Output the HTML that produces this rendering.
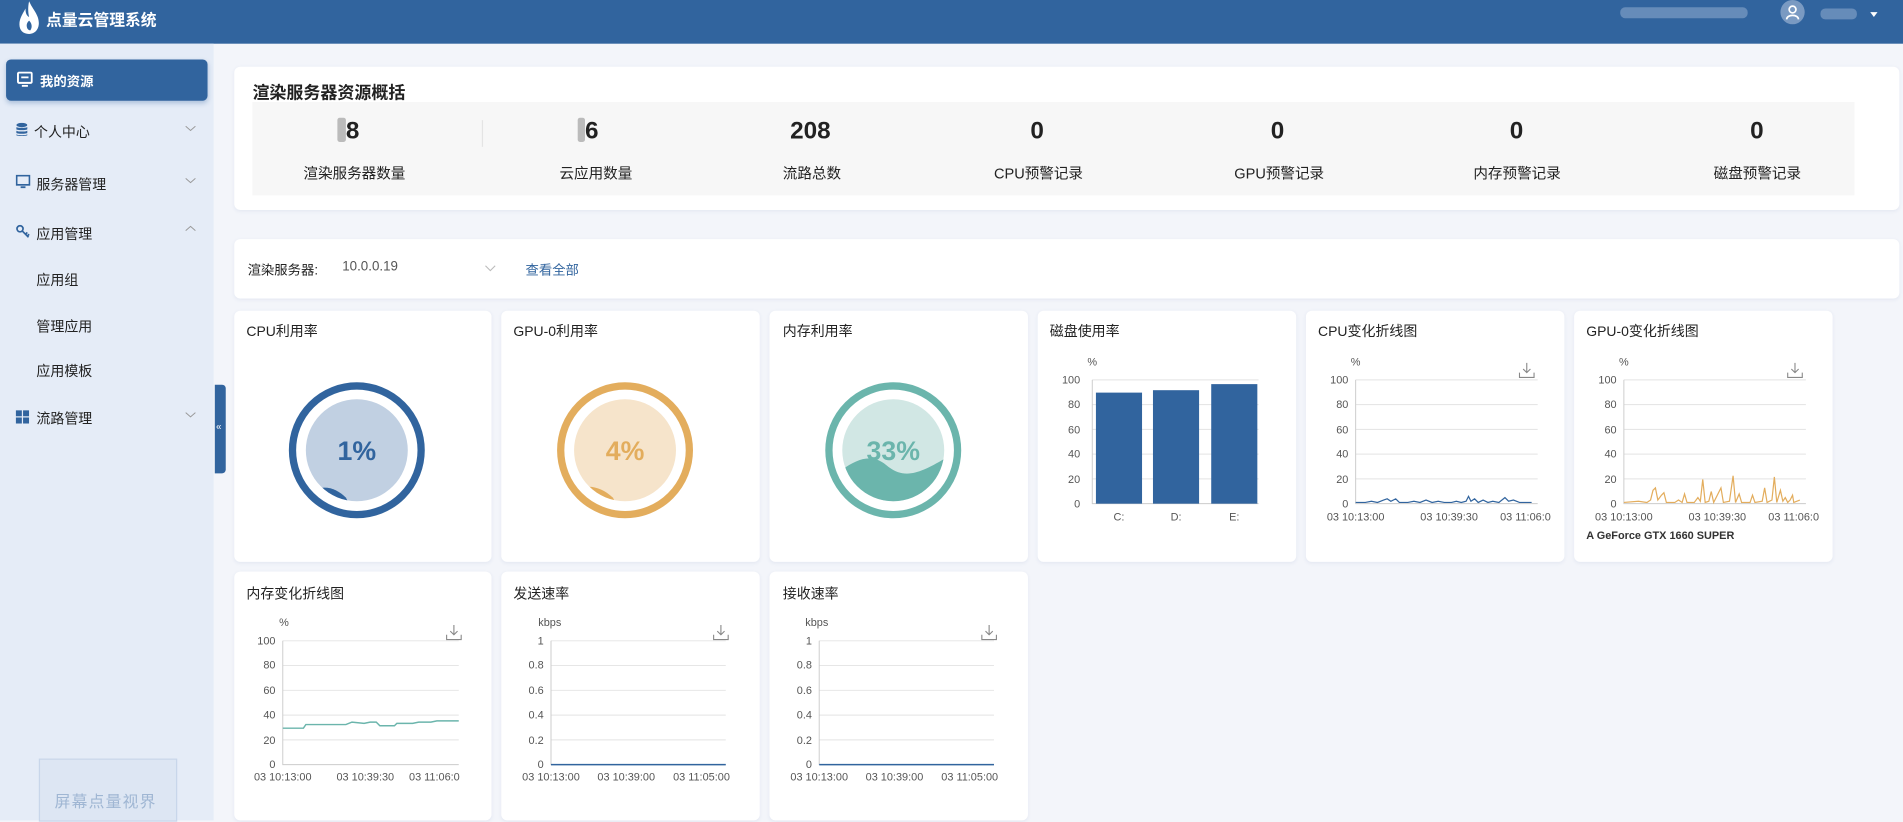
<!DOCTYPE html>
<html><head><meta charset="utf-8"><style>
html,body{margin:0;padding:0;width:1903px;height:811px;overflow:hidden;background:#f3f5fa;}
#w{position:absolute;left:0;top:0;width:1568px;height:668px;transform:scale(1.21365);transform-origin:0 0;font-family:"Liberation Sans","Noto Sans CJK SC",sans-serif;color:#333;font-size:12px;}
.a{position:absolute;}
.card{position:absolute;background:#fff;border-radius:5px;box-shadow:0 1px 3px rgba(60,90,150,.08);}
.t{position:absolute;font-size:12px;color:#222;white-space:nowrap;}
.s{font-size:11.5px;}
</style></head><body><div id="w">
<div class="a" style="left:0;top:0;width:1568px;height:36px;background:#31649e"></div>
<svg class="a" style="left:15px;top:1px" width="18" height="28" viewBox="0 0 18 28"><path d="M9 0 C12 7 17 11 17 18 C17 24 13 27 9 27 C4 27 1 24 1 19 C1 14 4 10 6 6 C6 10 7 12 9 13 C8 9 8 4 9 0Z" fill="#fff"/><path d="M9 16 C11 18 12 21 10 24 C8 24 7 22 7 20 C7 18 8 17 9 16Z" fill="#31649e"/></svg>
<div class="t" style="left:38px;top:6px;color:#fff;font-weight:bold;font-size:13px">点量云管理系统</div>
<div class="a" style="left:1335px;top:6px;width:105px;height:9px;background:#7d9cc4;border-radius:4px;opacity:.7"></div>
<div class="a" style="left:1467px;top:0px;width:20px;height:20px;border-radius:50%;background:#7a9ac2"></div>
<svg class="a" style="left:1470px;top:3px" width="14" height="14" viewBox="0 0 13 13"><circle cx="6.5" cy="4.5" r="2.6" fill="none" stroke="#fff" stroke-width="1.3"/><path d="M2 12 C2 8 11 8 11 12" fill="none" stroke="#fff" stroke-width="1.3"/></svg>
<div class="a" style="left:1500px;top:7px;width:30px;height:9px;background:#7d9cc4;border-radius:4px;opacity:.7"></div>
<div class="a" style="left:1541px;top:10px;width:0;height:0;border-left:3.5px solid transparent;border-right:3.5px solid transparent;border-top:4px solid #fff"></div>
<div class="a" style="left:0;top:36px;width:176px;height:640px;background:#e5ecf7"></div>
<div class="a" style="left:5px;top:49px;width:166px;height:34px;background:#31649e;border-radius:4px;box-shadow:0 2px 4px rgba(49,100,158,.3)"></div>
<svg class="a" style="left:14px;top:59px" width="13" height="13" viewBox="0 0 13 13"><rect x="0.8" y="0.8" width="11.4" height="8.5" rx="1" fill="none" stroke="#fff" stroke-width="1.6"/><rect x="3.5" y="4" width="6" height="1.5" fill="#fff"/><rect x="4" y="11" width="5" height="1.5" fill="#fff"/></svg>
<div class="t" style="left:33px;top:59px;color:#fff;font-weight:bold;font-size:11px">我的资源</div>
<svg class="a" style="left:13px;top:101px" width="10" height="12" viewBox="0 0 10 12"><ellipse cx="5" cy="2" rx="4.5" ry="1.8" fill="#31649e"/><path d="M0.5 3.5v2c0 1 9 1 9 0v-2c0 1.2-9 1.2-9 0zM0.5 6.5v2c0 1 9 1 9 0v-2c0 1.2-9 1.2-9 0zM0.5 9.5v.8c0 1 9 1 9 0v-.8c0 1.2-9 1.2-9 0z" fill="#31649e"/></svg>
<div class="t s" style="left:28px;top:101px">个人中心</div>
<svg class="a" style="left:13px;top:144px" width="12" height="12" viewBox="0 0 12 12"><rect x="0.7" y="0.7" width="10.6" height="7.6" fill="none" stroke="#31649e" stroke-width="1.4"/><rect x="4" y="9.5" width="4" height="1.5" fill="#31649e"/></svg>
<div class="t s" style="left:30px;top:144px">服务器管理</div>
<svg class="a" style="left:13px;top:185px" width="12" height="12" viewBox="0 0 12 12"><circle cx="3.5" cy="3.5" r="2.5" fill="none" stroke="#31649e" stroke-width="1.4"/><path d="M5.3 5.3 L10.5 10.5 M8 8 L9.5 6.5 M9.5 9.5 L11 8" stroke="#31649e" stroke-width="1.4"/></svg>
<div class="t s" style="left:30px;top:185px">应用管理</div>
<div class="t s" style="left:30px;top:223px">应用组</div>
<div class="t s" style="left:30px;top:261px">管理应用</div>
<div class="t s" style="left:30px;top:298px">应用模板</div>
<svg class="a" style="left:13px;top:338px" width="11" height="11" viewBox="0 0 11 11"><rect x="0" y="0" width="5" height="5" fill="#31649e"/><rect x="6" y="0" width="5" height="5" fill="#31649e"/><rect x="0" y="6" width="5" height="5" fill="#31649e"/><rect x="6" y="6" width="5" height="5" fill="#31649e"/></svg>
<div class="t s" style="left:30px;top:337px">流路管理</div>
<svg class="a" style="left:0;top:0" width="176" height="400"><g fill="none" stroke="#999" stroke-width="0.8"><path d="M153 104l4 3.5l4-3.5M153 147l4 3.5l4-3.5M153 340l4 3.5l4-3.5M153 190l4-3.5l4 3.5"/></g></svg>
<div class="a" style="left:177px;top:317px;width:9px;height:73px;background:#31649e;border-radius:0 3px 3px 0"></div>
<div class="t" style="left:178px;top:347px;color:#fff;font-size:8px">«</div>
<div class="a" style="left:32px;top:625px;width:112px;height:50px;background:#dde6f3;border:1px solid #c8d6ea"></div>
<div class="t" style="left:45px;top:650px;color:#9fb6d3;font-size:13px;letter-spacing:1px">屏幕点量视界</div>
<div class="card" style="left:193px;top:55px;width:1372px;height:118px"></div>
<div class="t" style="left:208px;top:66px;font-weight:bold;font-size:14px;color:#222">渲染服务器资源概括</div>
<div class="a" style="left:208px;top:84px;width:1320px;height:77px;background:#f7f7f7"></div>
<div class="a" style="left:397px;top:99px;width:1px;height:22px;background:#e4e4e4"></div>
<div class="t" style="left:278px;top:97px;font-weight:bold;font-size:20px;color:#222"><span style="display:inline-block;width:7px;height:20px;background:#bbb;vertical-align:-3px;border-radius:2px"></span>8</div>
<div class="t" style="left:476px;top:97px;font-weight:bold;font-size:20px;color:#222"><span style="display:inline-block;width:6px;height:20px;background:#bbb;vertical-align:-3px;border-radius:2px"></span>6</div>
<div class="t" style="left:651px;top:97px;font-weight:bold;font-size:20px;color:#222">208</div>
<div class="t" style="left:849px;top:97px;font-weight:bold;font-size:20px;color:#222">0</div>
<div class="t" style="left:1047px;top:97px;font-weight:bold;font-size:20px;color:#222">0</div>
<div class="t" style="left:1244px;top:97px;font-weight:bold;font-size:20px;color:#222">0</div>
<div class="t" style="left:1442px;top:97px;font-weight:bold;font-size:20px;color:#222">0</div>
<div class="t" style="left:250px;top:134px">渲染服务器数量</div>
<div class="t" style="left:461px;top:134px">云应用数量</div>
<div class="t" style="left:645px;top:134px">流路总数</div>
<div class="t" style="left:819px;top:134px">CPU预警记录</div>
<div class="t" style="left:1017px;top:134px">GPU预警记录</div>
<div class="t" style="left:1214px;top:134px">内存预警记录</div>
<div class="t" style="left:1412px;top:134px">磁盘预警记录</div>
<div class="card" style="left:193px;top:197px;width:1372px;height:49px"></div>
<div class="t" style="left:204px;top:214px;font-size:11px">渲染服务器:</div>
<div class="t" style="left:282px;top:214px;font-size:11px;color:#555">10.0.0.19</div>
<svg class="a" style="left:399px;top:218px" width="10" height="6"><path d="M1 1l4 4l4-4" fill="none" stroke="#bbb" stroke-width="0.9"/></svg>
<div class="t" style="left:433px;top:214px;font-size:11px;color:#31649e">查看全部</div>
<div class="card" style="left:193px;top:256px;width:212px;height:207px"></div>
<div class="card" style="left:413px;top:256px;width:213px;height:207px"></div>
<div class="card" style="left:634px;top:256px;width:213px;height:207px"></div>
<div class="card" style="left:855px;top:256px;width:213px;height:207px"></div>
<div class="card" style="left:1076px;top:256px;width:213px;height:207px"></div>
<div class="card" style="left:1297px;top:256px;width:213px;height:207px"></div>
<div class="card" style="left:193px;top:471px;width:212px;height:205px"></div>
<div class="card" style="left:413px;top:471px;width:213px;height:205px"></div>
<div class="card" style="left:634px;top:471px;width:213px;height:205px"></div>
<div class="t s" style="left:203px;top:265px">CPU利用率</div>
<div class="t s" style="left:423px;top:265px">GPU-0利用率</div>
<div class="t s" style="left:645px;top:265px">内存利用率</div>
<div class="t s" style="left:865px;top:265px">磁盘使用率</div>
<div class="t s" style="left:1086px;top:265px">CPU变化折线图</div>
<div class="t s" style="left:1307px;top:265px">GPU-0变化折线图</div>
<div class="t s" style="left:203px;top:481px">内存变化折线图</div>
<div class="t s" style="left:423px;top:481px">发送速率</div>
<div class="t s" style="left:645px;top:481px">接收速率</div>

<svg class="a" style="left:0;top:0" width="1568" height="668" font-family="Liberation Sans, sans-serif">
<defs>
<clipPath id="c1"><circle cx="294" cy="371" r="42"/></clipPath>
<clipPath id="c2"><circle cx="515" cy="371" r="42"/></clipPath>
<clipPath id="c3"><circle cx="736" cy="371" r="42"/></clipPath>
</defs>
<circle cx="294" cy="371" r="53" fill="none" stroke="#31649e" stroke-width="6"/>
<circle cx="294" cy="371" r="42" fill="#c1d0e2"/>
<path d="M250 410 C262 398 275 400 285 410 L290 420 L250 420Z" fill="#31649e" clip-path="url(#c1)"/>
<text x="294" y="379" text-anchor="middle" font-size="22" font-weight="bold" fill="#31649e">1%</text>
<circle cx="515" cy="371" r="53" fill="none" stroke="#e3ad5d" stroke-width="6"/>
<circle cx="515" cy="371" r="42" fill="#f6e4cb"/>
<path d="M470 406 C482 398 494 400 505 410 L510 420 L470 420Z" fill="#e3ad5d" clip-path="url(#c2)"/>
<text x="515" y="379" text-anchor="middle" font-size="22" font-weight="bold" fill="#e3ad5d">4%</text>
<circle cx="736" cy="371" r="53" fill="none" stroke="#6bb5ac" stroke-width="6"/>
<circle cx="736" cy="371" r="42" fill="#d1e7e4"/>
<path d="M690 390 C705 378 718 373 730 383 C745 396 758 390 780 377 L780 420 L690 420Z" fill="#6bb5ac" clip-path="url(#c3)"/>
<text x="736" y="379" text-anchor="middle" font-size="22" font-weight="bold" fill="#6bb5ac">33%</text>

<g font-size="9" fill="#555" text-anchor="end">
<g stroke="#e3e3e3" stroke-width="0.8"><path d="M900 313H1037M900 333.4H1037M900 353.8H1037M900 374.2H1037M900 394.6H1037"/></g>
<path d="M900 313V415H1037" stroke="#ccc" stroke-width="0.8" fill="none"/>
<text x="900" y="301" text-anchor="middle">%</text>
<text x="890" y="316">100</text><text x="890" y="336">80</text><text x="890" y="357">60</text><text x="890" y="377">40</text><text x="890" y="398">20</text><text x="890" y="418">0</text>
<rect x="903" y="323.5" width="38" height="91.5" fill="#31649e"/>
<rect x="950" y="321.5" width="38" height="93.5" fill="#31649e"/>
<rect x="998" y="316.5" width="38" height="98.5" fill="#31649e"/>
<g text-anchor="middle"><text x="922" y="429">C:</text><text x="969" y="429">D:</text><text x="1017" y="429">E:</text></g>

<g stroke="#e3e3e3" stroke-width="0.8"><path d="M1117 313H1267M1117 333.4H1267M1117 353.8H1267M1117 374.2H1267M1117 394.6H1267"/></g>
<path d="M1117 313V415H1267" stroke="#ccc" stroke-width="0.8" fill="none"/>
<text x="1117" y="301" text-anchor="middle">%</text>
<text x="1111" y="316">100</text><text x="1111" y="336">80</text><text x="1111" y="357">60</text><text x="1111" y="377">40</text><text x="1111" y="398">20</text><text x="1111" y="418">0</text>
<polyline fill="none" stroke="#31649e" stroke-width="1" points="1117,414 1125,414 1130,413 1135,414 1140,412 1143,411 1146,413 1150,411 1153,414 1160,414 1165,413 1170,414 1175,412 1180,414 1185,413 1190,414 1196,414 1200,413 1204,414 1208,413 1210,409 1212,413 1215,411 1218,414 1222,412 1226,414 1230,413 1235,414 1240,410 1243,413 1247,412 1252,414 1262,414"/>
<g text-anchor="middle"><text x="1117" y="429">03 10:13:00</text><text x="1194" y="429">03 10:39:30</text></g>
<text x="1236" y="429" text-anchor="start">03 11:06:0</text>
<g stroke="#e3e3e3" stroke-width="0.8"><path d="M1338 313H1488M1338 333.4H1488M1338 353.8H1488M1338 374.2H1488M1338 394.6H1488"/></g>
<path d="M1338 313V415H1488" stroke="#ccc" stroke-width="0.8" fill="none"/>
<text x="1338" y="301" text-anchor="middle">%</text>
<text x="1332" y="316">100</text><text x="1332" y="336">80</text><text x="1332" y="357">60</text><text x="1332" y="377">40</text><text x="1332" y="398">20</text><text x="1332" y="418">0</text>
<polyline fill="none" stroke="#e3ad5d" stroke-width="1" points="1338,414 1350,413 1357,414 1360,412 1362,404 1364,402 1366,412 1369,408 1371,406 1373,414 1380,414 1383,412 1386,414 1388,407 1390,414 1396,414 1399,410 1401,413 1403,395 1405,414 1408,413 1410,405 1412,414 1416,406 1418,402 1420,414 1425,413 1428,392 1430,414 1433,407 1435,414 1442,414 1444,408 1446,414 1452,413 1454,402 1456,414 1460,412 1462,393 1464,414 1467,404 1469,413 1471,410 1473,414 1475,412 1477,408 1478,414 1483,412"/>
<g text-anchor="middle"><text x="1338" y="429">03 10:13:00</text><text x="1415" y="429">03 10:39:30</text></g>
<text x="1457" y="429" text-anchor="start">03 11:06:0</text>
<text x="1307" y="444" text-anchor="start" font-weight="bold" fill="#333">A GeForce GTX 1660 SUPER</text>

<g stroke="#e3e3e3" stroke-width="0.8"><path d="M233 528H378M233 548.4H378M233 568.8H378M233 589.2H378M233 609.6H378"/></g>
<path d="M233 528V630H378" stroke="#ccc" stroke-width="0.8" fill="none"/>
<text x="234" y="516" text-anchor="middle">%</text>
<text x="227" y="531">100</text><text x="227" y="551">80</text><text x="227" y="572">60</text><text x="227" y="592">40</text><text x="227" y="613">20</text><text x="227" y="633">0</text>
<polyline fill="none" stroke="#6bb5ac" stroke-width="1.2" points="233,600 250,600 252,597 285,597 290,595 300,596 305,595 310,595 313,598 325,598 327,596 340,596 345,595 355,595 360,594 378,594"/>
<g text-anchor="middle"><text x="233" y="643">03 10:13:00</text><text x="301" y="643">03 10:39:30</text></g>
<text x="337" y="643" text-anchor="start">03 11:06:0</text>
<g stroke="#e3e3e3" stroke-width="0.8"><path d="M454 528H598M454 548.4H598M454 568.8H598M454 589.2H598M454 609.6H598"/></g>
<path d="M454 528V630H598" stroke="#ccc" stroke-width="0.8" fill="none"/>
<path d="M454 630H598" stroke="#31649e" stroke-width="1.2"/>
<text x="453" y="516" text-anchor="middle">kbps</text>
<text x="448" y="531">1</text><text x="448" y="551">0.8</text><text x="448" y="572">0.6</text><text x="448" y="592">0.4</text><text x="448" y="613">0.2</text><text x="448" y="633">0</text>
<g text-anchor="middle"><text x="454" y="643">03 10:13:00</text><text x="516" y="643">03 10:39:00</text><text x="578" y="643">03 11:05:00</text></g>
<g stroke="#e3e3e3" stroke-width="0.8"><path d="M675 528H819M675 548.4H819M675 568.8H819M675 589.2H819M675 609.6H819"/></g>
<path d="M675 528V630H819" stroke="#ccc" stroke-width="0.8" fill="none"/>
<path d="M675 630H819" stroke="#31649e" stroke-width="1.2"/>
<text x="673" y="516" text-anchor="middle">kbps</text>
<text x="669" y="531">1</text><text x="669" y="551">0.8</text><text x="669" y="572">0.6</text><text x="669" y="592">0.4</text><text x="669" y="613">0.2</text><text x="669" y="633">0</text>
<g text-anchor="middle"><text x="675" y="643">03 10:13:00</text><text x="737" y="643">03 10:39:00</text><text x="799" y="643">03 11:05:00</text></g>
</g>
<g fill="none" stroke="#888" stroke-width="0.9">
<path d="M1258 299v8M1255 304l3 3l3-3M1252 307v4h12v-4"/>
<path d="M1479 299v8M1476 304l3 3l3-3M1473 307v4h12v-4"/>
<path d="M374 515v8M371 520l3 3l3-3M368 523v4h12v-4"/>
<path d="M594 515v8M591 520l3 3l3-3M588 523v4h12v-4"/>
<path d="M815 515v8M812 520l3 3l3-3M809 523v4h12v-4"/>
</g>
</svg>
</div></body></html>
